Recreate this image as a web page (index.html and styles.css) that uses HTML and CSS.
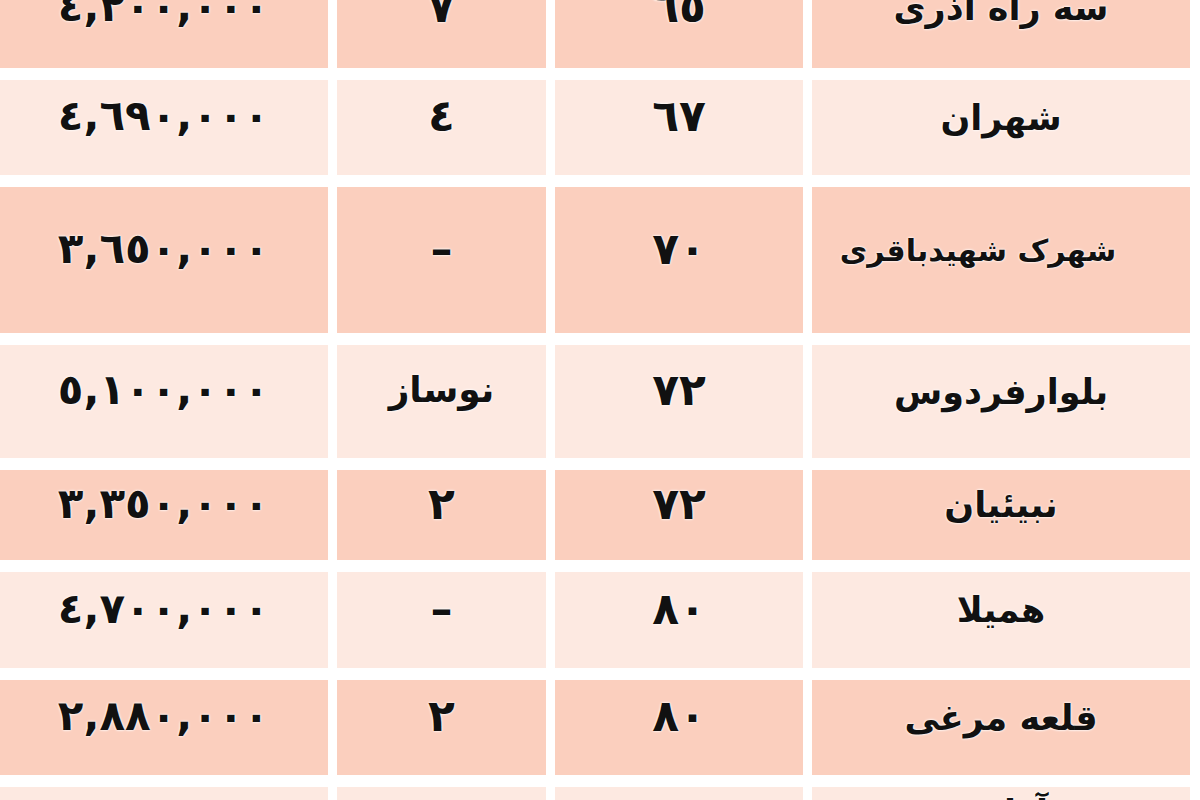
FILE: index.html
```html
<!DOCTYPE html>
<html lang="fa">
<head>
<meta charset="utf-8">
<title>قیمت مسکن</title>
<link rel="stylesheet" href="styles.css">
</head>
<body>
<div class="table" dir="rtl">
  <div class="row dark r1">
    <div class="cell name">سه راه آذری</div>
    <div class="cell num">٦٥</div>
    <div class="cell num">٧</div>
    <div class="cell price">٤,٢٠٠,٠٠٠</div>
  </div>
  <div class="row light r2">
    <div class="cell name">شهران</div>
    <div class="cell num">٦٧</div>
    <div class="cell num">٤</div>
    <div class="cell price">٤,٦٩٠,٠٠٠</div>
  </div>
  <div class="row dark r3">
    <div class="cell name long">شهرک شهیدباقری</div>
    <div class="cell num">٧٠</div>
    <div class="cell num">–</div>
    <div class="cell price">٣,٦٥٠,٠٠٠</div>
  </div>
  <div class="row light r4">
    <div class="cell name">بلوارفردوس</div>
    <div class="cell num">٧٢</div>
    <div class="cell word">نوساز</div>
    <div class="cell price">٥,١٠٠,٠٠٠</div>
  </div>
  <div class="row dark r5">
    <div class="cell name">نبیئیان</div>
    <div class="cell num">٧٢</div>
    <div class="cell num">٢</div>
    <div class="cell price">٣,٣٥٠,٠٠٠</div>
  </div>
  <div class="row light r6">
    <div class="cell name">همیلا</div>
    <div class="cell num">٨٠</div>
    <div class="cell num">–</div>
    <div class="cell price">٤,٧٠٠,٠٠٠</div>
  </div>
  <div class="row dark r7">
    <div class="cell name">قلعه مرغی</div>
    <div class="cell num">٨٠</div>
    <div class="cell num">٢</div>
    <div class="cell price">٢,٨٨٠,٠٠٠</div>
  </div>
  <div class="row light r8">
    <div class="cell name">آزادی</div>
    <div class="cell num">٨٥</div>
    <div class="cell num">٣</div>
    <div class="cell price">٣,٩٠٠,٠٠٠</div>
  </div>
</div>
</body>
</html>
```
FILE: styles.css
```css
html, body {
  margin: 0;
  padding: 0;
  background: #ffffff;
  overflow: hidden;
}

.table {
  width: 1190px;
  margin: -32px 0 0 0;
  display: flex;
  flex-direction: column;
  gap: 12px;
  font-family: "DejaVu Sans", "Noto Sans", sans-serif;
  font-weight: bold;
  color: #111;
}

.row {
  display: grid;
  grid-template-columns: 378px 248px 209px 329px;
  column-gap: 9px;
}

.r1 { height: 100px; }
.r2 { height: 95px; }
.r3 { height: 146px; }
.r4 { height: 113px; }
.r5 { height: 90px; }
.r6 { height: 96px; }
.r7 { height: 95px; }
.r8 { height: 100px; }

.cell {
  display: flex;
  align-items: center;
  justify-content: center;
  padding-bottom: 24px;
  font-size: 36px;
  text-shadow: 0 0 3px #fff, 0 0 2px #fff;
  box-sizing: border-box;
}

.r8 .cell {
  align-items: flex-start;
  padding-top: 6px;
  padding-bottom: 0;
}

.dark .cell { background: #fbcfbe; }
.light .cell { background: #fde9e1; }

.name {
  font-size: 35px;
  padding-top: 4px;
}

.name.long {
  font-size: 30px;
  padding-right: 46px;
  padding-left: 0;
}

.num {
  font-size: 44px;
}

.word {
  font-size: 36px;
}

.price {
  direction: ltr;
  font-size: 42px;
}
```
